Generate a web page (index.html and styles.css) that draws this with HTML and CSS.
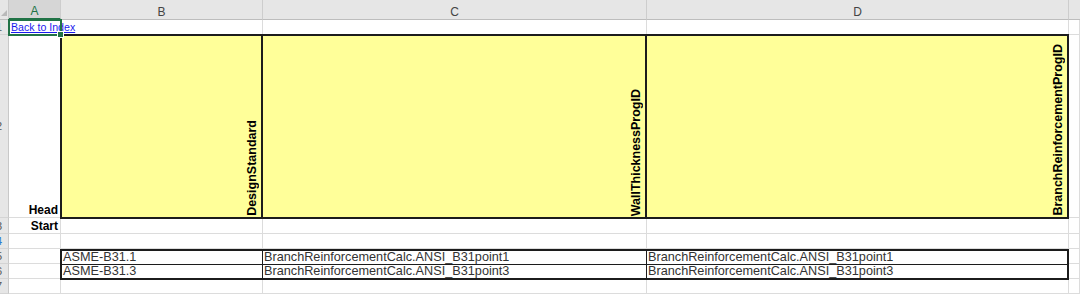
FILE: index.html
```html
<!DOCTYPE html>
<html>
<head>
<meta charset="utf-8">
<link rel="stylesheet" href="styles.css">
</head>
<body>
<div class="sheet">
  <div class="corner"><div class="tri"></div></div>
  <div class="colhdr sel">A</div>
  <div class="colhdr">B</div>
  <div class="colhdr">C</div>
  <div class="colhdr">D</div>
  <div class="colhdr last"></div>

  <div class="rowhdr"><span>1</span></div>
  <div class="cell a1"><a href="#">Back to Index</a></div>
  <div class="cell"></div>
  <div class="cell"></div>
  <div class="cell"></div>
  <div class="cell"></div>

  <div class="rowhdr"><span>2</span></div>
  <div class="cell label bottom">Head</div>
  <div class="hdrblock">
    <div class="hcell"><span class="vtext">DesignStandard</span></div>
    <div class="hcell"><span class="vtext">WallThicknessProgID</span></div>
    <div class="hcell"><span class="vtext">BranchReinforcementProgID</span></div>
  </div>
  <div class="cell"></div>

  <div class="rowhdr"><span>3</span></div>
  <div class="cell label">Start</div>
  <div class="cell"></div>
  <div class="cell"></div>
  <div class="cell"></div>
  <div class="cell"></div>

  <div class="rowhdr blue"><span>4</span></div>
  <div class="cell"></div>
  <div class="cell"></div>
  <div class="cell"></div>
  <div class="cell"></div>
  <div class="cell"></div>

  <div class="rowhdr"><span>5</span></div>
  <div class="cell"></div>
  <div class="datablock">
    <div class="dcell">ASME-B31.1</div>
    <div class="dcell">BranchReinforcementCalc.ANSI_B31point1</div>
    <div class="dcell">BranchReinforcementCalc.ANSI_B31point1</div>
    <div class="dcell">ASME-B31.3</div>
    <div class="dcell">BranchReinforcementCalc.ANSI_B31point3</div>
    <div class="dcell">BranchReinforcementCalc.ANSI_B31point3</div>
  </div>
  <div class="cell"></div>

  <div class="rowhdr"><span>6</span></div>
  <div class="cell"></div>
  <div class="cell"></div>

  <div class="rowhdr"><span>7</span></div>
  <div class="cell"></div>
  <div class="cell"></div>
  <div class="cell"></div>
  <div class="cell"></div>
  <div class="cell"></div>
</div>
</body>
</html>
```

FILE: styles.css
```css
html, body {
  margin: 0;
  padding: 0;
  background: #ffffff;
}

.sheet {
  display: grid;
  grid-template-columns: 9px 52px 202px 384px 422px 11px;
  grid-template-rows: 20px 15px 183px 16px 15px 15px 15px 15px;
  width: 1080px;
  height: 294px;
  overflow: hidden;
  font-family: "Liberation Sans", Arial, sans-serif;
  background: #ffffff;
}

.corner {
  background: #e6e6e6;
  border-right: 1px solid #c8c8c8;
  border-bottom: 1px solid #bdbdbd;
  display: flex;
  align-items: flex-end;
  justify-content: flex-end;
  padding: 0 1px 3px 0;
  box-sizing: border-box;
}

.tri {
  width: 0;
  height: 0;
  border-left: 6px solid transparent;
  border-bottom: 6px solid #b9b9b9;
}

.colhdr {
  background: #e6e6e6;
  border-right: 1px solid #cdcdcd;
  border-bottom: 1px solid #bdbdbd;
  box-sizing: border-box;
  display: flex;
  align-items: center;
  justify-content: center;
  font-size: 12px;
  color: #444444;
  padding-top: 4px;
}

.colhdr.sel {
  background: #d6d6d6;
  color: #217346;
  border-bottom: 2px solid #217346;
}

.colhdr.last {
  border-right: none;
}

.rowhdr {
  background: #e6e6e6;
  border-right: 1px solid #c8c8c8;
  border-bottom: 1px solid #d4d4d4;
  box-sizing: border-box;
  overflow: hidden;
  display: flex;
  align-items: center;
  font-size: 11px;
  color: #555555;
}

.rowhdr span {
  margin-left: -4px;
}

.rowhdr.blue {
  color: #2f7bd1;
}

.cell {
  border-right: 1px solid #dcdcdc;
  border-bottom: 1px solid #dcdcdc;
  box-sizing: border-box;
  min-width: 0;
}

.a1 {
  position: relative;
  outline: 2px solid #217346;
  outline-offset: -1px;
  white-space: nowrap;
  font-size: 10.6px;
  display: flex;
  align-items: center;
  padding-left: 2px;
  z-index: 2;
}

.a1::after {
  content: "";
  position: absolute;
  right: -4px;
  bottom: -4px;
  width: 5px;
  height: 5px;
  background: #217346;
  border: 1px solid #ffffff;
}

.a1 a {
  color: #1a1aee;
  text-decoration: underline;
}

.label {
  font-weight: bold;
  font-size: 12px;
  color: #000000;
  display: flex;
  align-items: center;
  justify-content: flex-end;
  padding-right: 2px;
}

.label.bottom {
  align-items: flex-end;
  padding-bottom: 0;
}

.hdrblock {
  grid-column: 3 / 6;
  grid-row: 3;
  margin: -1px 0 -1px -1px;
  border: 2px solid #1c1c1c;
  background: #ffff99;
  display: grid;
  grid-template-columns: 201px 384px 1fr;
  z-index: 1;
}

.hcell {
  border-right: 2px solid #1c1c1c;
  display: flex;
  align-items: flex-end;
  justify-content: flex-end;
  padding: 0 1px 1px 0;
}

.hcell:last-child {
  border-right: none;
}

.vtext {
  writing-mode: vertical-rl;
  transform: rotate(180deg);
  font-weight: bold;
  font-size: 12.5px;
  line-height: 15px;
  color: #000000;
  white-space: nowrap;
}

.datablock {
  grid-column: 3 / 6;
  grid-row: 6 / 8;
  margin: 0 0 -1px -1px;
  border: 2px solid #1c1c1c;
  background: #ffffff;
  display: grid;
  grid-template-columns: 201px 384px 1fr;
  grid-template-rows: 1fr 1fr;
  z-index: 1;
}

.dcell {
  border-right: 1px solid #1c1c1c;
  font-size: 12.7px;
  line-height: 13px;
  color: #333333;
  padding-left: 1px;
  white-space: nowrap;
  overflow: hidden;
  display: flex;
  align-items: center;
}

.dcell:nth-child(3n) {
  border-right: none;
}

.dcell:nth-child(-n+3) {
  border-bottom: 1px solid #1c1c1c;
}
```
